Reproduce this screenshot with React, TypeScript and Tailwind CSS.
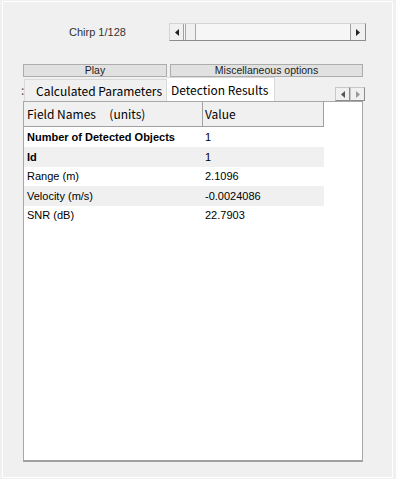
import React from "react";

const ROWS = [
  { name: "Number of Detected Objects", value: "1", bold: true },
  { name: "Id", value: "1", bold: true },
  { name: "Range (m)", value: "2.1096", bold: false },
  { name: "Velocity (m/s)", value: "-0.0024086", bold: false },
  { name: "SNR (dB)", value: "22.7903", bold: false },
];

const ROW_H = ["h-[20px]", "h-[20px]", "h-[19px]", "h-[20px]", "h-[19px]"];

function Arrow({ dir, color = "#404040" }: { dir: "left" | "right"; color?: string }) {
  return (
    <svg width="4" height="7" viewBox="0 0 4 7">
      {dir === "left" ? <polygon points="4,0 0,3.5 4,7" fill={color} /> : <polygon points="0,0 4,3.5 0,7" fill={color} />}
    </svg>
  );
}

function ScrollBar() {
  return (
    <div className="flex w-[197px] h-[18px] border border-[#d4d4d4] border-r-[#8c8c8c] border-b-[#8c8c8c] bg-[#f6f6f6]">
      <div className="w-[14px] flex items-center justify-center bg-[#f0f0f0] border-r border-[#a0a0a0]">
        <Arrow dir="left" color="#222" />
      </div>
      <div className="ml-px w-[11px] bg-[#f0f0f0] border-l border-r border-[#a8a8a8]" />
      <div className="flex-1" />
      <div className="w-[15px] flex items-center justify-center bg-[#f0f0f0] border-l border-[#a0a0a0]">
        <Arrow dir="right" color="#222" />
      </div>
    </div>
  );
}

export default function App() {
  const sans = "font-['Liberation_Sans',Arial,sans-serif]";
  const ui = "font-['Noto_Sans_CJK_SC','Noto_Sans',sans-serif]";
  return (
    <div className="w-[396px] h-[479px] bg-[#f0f0f0] pt-px pl-[2px] overflow-hidden">
      <div className="w-[391px] h-[477px] border border-white flex flex-col">
        {/* chirp slider */}
        <div className="mt-[21px] h-[18px] flex items-center">
          <div className={`w-[166px] pl-[66px] text-[11px] text-[#333] ${sans}`}>Chirp 1/128</div>
          <ScrollBar />
        </div>

        {/* buttons */}
        <div className={`mt-[23px] h-[13px] flex pl-[20px] text-[10.5px] leading-[11px] text-[#222] ${sans}`}>
          <div className="w-[144px] h-[13px] flex items-center justify-center bg-[#e1e1e1] border border-[#adadad]">Play</div>
          <div className="ml-[3px] w-[193px] h-[13px] flex items-center justify-center bg-[#e1e1e1] border border-[#adadad]">
            Miscellaneous options
          </div>
        </div>

        {/* tabs */}
        <div className={`h-[24px] flex items-end pl-[18px] text-[12px] text-black ${ui}`}>
          <div className="w-[3px] h-[22px] flex items-center text-[#555] overflow-hidden leading-none">:</div>
          <div className="w-[143px] h-[22px] flex items-center pl-[11px] border-l border-t border-r border-[#d9d9d9] whitespace-nowrap overflow-hidden">
            Calculated Parameters
          </div>
          <div className="w-[108px] h-[24px] flex items-center pl-[4px] bg-white border-t border-r border-[#d9d9d9] whitespace-nowrap">
            Detection Results
          </div>
          <div className="ml-auto mr-[27px] flex">
            <div className="w-[15px] h-[14px] flex items-center justify-center border border-[#c8c8c8] border-r-[#8c8c8c] border-b-[#8c8c8c] bg-[#f0f0f0]">
              <Arrow dir="left" color="#555" />
            </div>
            <div className="w-[15px] h-[14px] flex items-center justify-center border border-[#c8c8c8] border-r-[#8c8c8c] border-b-[#8c8c8c] bg-[#f0f0f0]">
              <Arrow dir="right" color="#999" />
            </div>
          </div>
        </div>

        {/* panel */}
        <div className="ml-[20px] w-[340px] h-[361px] bg-white border border-[#a8a8a8] border-b-2 border-b-[#a0a0a0]">
          <div className="w-[300px]">
            <div className={`h-[25px] flex bg-[#f0f0f0] border-b border-[#a0a0a0] text-[12px] text-black ${ui}`}>
              <div className="w-[179px] pl-[3px] flex items-center border-r border-[#a0a0a0] whitespace-pre">
                Field Names     (units)
              </div>
              <div className="w-[121px] pl-[2px] flex items-center border-r border-[#a0a0a0]">Value</div>
            </div>
            {ROWS.map((r, i) => (
              <div
                key={r.name}
                className={`${ROW_H[i]} flex items-center text-[11px] text-black ${sans} ${i % 2 === 1 ? "bg-[#f0f0f0]" : "bg-white"}`}
              >
                <div className={`w-[179px] pl-[3px] ${r.bold ? "font-bold" : ""}`}>{r.name}</div>
                <div className="w-[121px] pl-[2px]">{r.value}</div>
              </div>
            ))}
          </div>
        </div>
      </div>
    </div>
  );
}
